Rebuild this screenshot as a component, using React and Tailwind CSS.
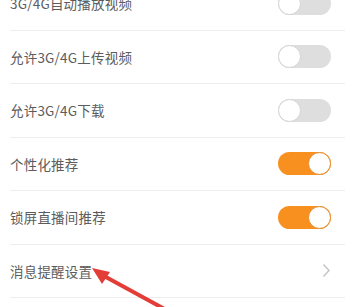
import React from "react";

// ----------------------------------------------------
// Settings rows
// ----------------------------------------------------
const rows = [
  { label: "3G/4G自动播放视频", type: "toggle", on: false },
  { label: "允许3G/4G上传视频", type: "toggle", on: false },
  { label: "允许3G/4G下载", type: "toggle", on: false },
  { label: "个性化推荐", type: "toggle", on: true },
  { label: "锁屏直播间推荐", type: "toggle", on: true },
  { label: "消息提醒设置", type: "link" },
  { label: "", type: "none" },
];

function Toggle({ on }) {
  return (
    <div
      className={`w-[53px] h-[23px] rounded-full flex items-center ${
        on ? "bg-[#f7901e] justify-end" : "bg-[#dedede] justify-start"
      }`}
    >
      <div
        className={`w-[23px] h-[23px] rounded-full bg-white border ${
          on ? "border-[#e58a2a]" : "border-[#d4d4d4]"
        }`}
      />
    </div>
  );
}

function Chevron() {
  return (
    <svg width="9" height="15" viewBox="0 0 9 15" className="mr-[14px]">
      <path d="M1.5 1.5 L7 7.5 L1.5 13.5" fill="none" stroke="#c4c4c4" strokeWidth="1.4" />
    </svg>
  );
}

export default function App() {
  return (
    <div
      className="relative w-[357px] h-[307px] overflow-hidden bg-white"
      style={{ fontFamily: '"Noto Sans CJK SC", "Noto Sans", sans-serif' }}
    >
      <div className="-mt-[23px] pl-[10px] pr-[12px]">
        {rows.map((row, idx) => (
          <div
            key={idx}
            className="h-[53.5px] flex items-center justify-between border-b border-[#ededed]"
          >
            <span className="text-[13.5px] text-[#5c5c5c] tracking-[0.2px]">{row.label}</span>
            {row.type === "toggle" && (
              <div className="mr-[14px]">
                <Toggle on={row.on} />
              </div>
            )}
            {row.type === "link" && <Chevron />}
          </div>
        ))}
      </div>

      {/* red annotation arrow */}
      <svg
        className="absolute left-0 top-0 pointer-events-none"
        width="357"
        height="307"
        viewBox="0 0 357 307"
      >
        <line x1="104" y1="276" x2="170" y2="312" stroke="#e23d36" strokeWidth="4" />
        <polygon points="92,268 110,272 102,284" fill="#e23d36" />
      </svg>
    </div>
  );
}
